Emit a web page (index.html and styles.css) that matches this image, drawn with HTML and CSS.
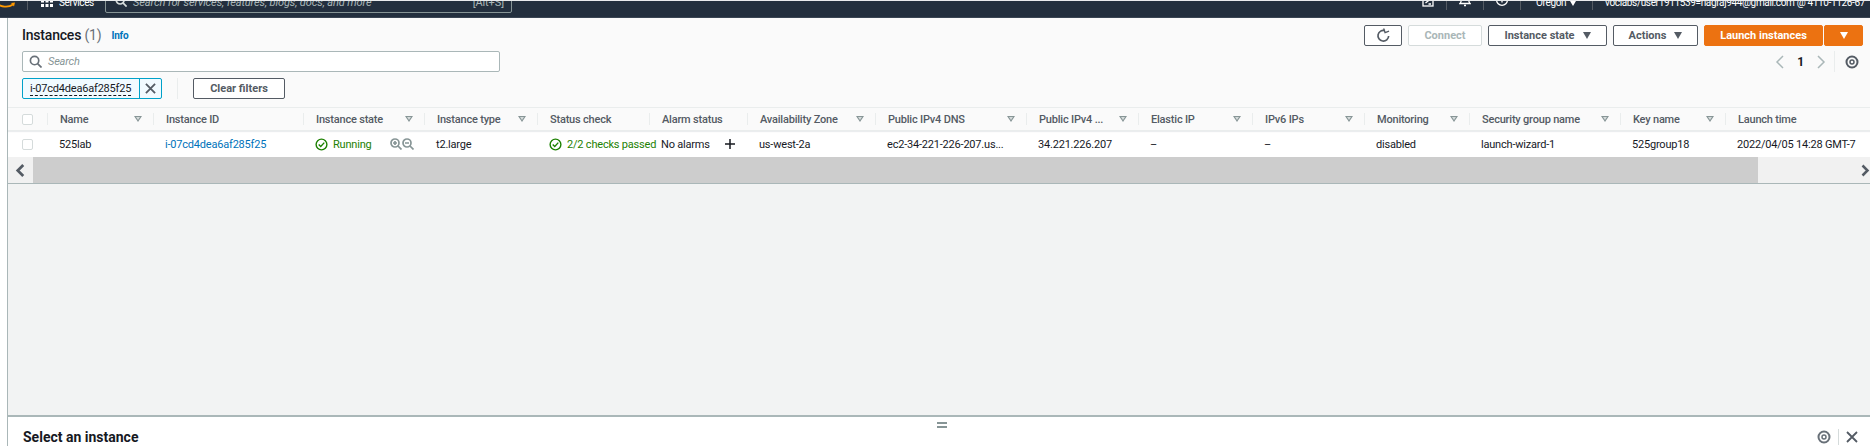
FILE: index.html
```html
<!DOCTYPE html>
<html lang="en">
<head>
    <meta charset="UTF-8">
    <title>Instances</title>
    <link rel="stylesheet" href="styles.css">
</head>
<body>
    <nav class="topnav">
        <svg class="logo" width="16" height="8" viewBox="0 0 16 8"><path d="M-4 1c5 4 12 5 17 1.500" fill="none" stroke="#f90" stroke-width="1.800"/><path d="M11 1l4-.5-1 4z" fill="#f90"/></svg>
        <span class="nav-sep nav-sep-first"></span>
        <svg class="grid-icon" width="12" height="12" viewBox="0 0 12 12" fill="#fff"><rect x="0" y="0" width="3" height="3"/><rect x="4.500" y="0" width="3" height="3"/><rect x="9" y="0" width="3" height="3"/><rect x="0" y="4.500" width="3" height="3"/><rect x="4.500" y="4.500" width="3" height="3"/><rect x="9" y="4.500" width="3" height="3"/><rect x="0" y="9" width="3" height="3"/><rect x="4.500" y="9" width="3" height="3"/><rect x="9" y="9" width="3" height="3"/></svg>
        <span class="nav-text services">Services</span>
        <div class="nav-search">
            <svg width="12" height="12" viewBox="0 0 14 14" fill="none" stroke="#d5dbdb" stroke-width="2"><circle cx="6" cy="6" r="4.500"/><path d="M9 9l4.500 4.500"/></svg>
            <span class="nav-search-text">Search for services, features, blogs, docs, and more</span>
            <span class="nav-search-key">[Alt+S]</span>
        </div>
        <div class="nav-right">
            <svg class="nav-icon" width="12" height="16" viewBox="0 0 12 16" fill="none" stroke="#fff" stroke-width="1.300"><rect x="1" y="2" width="10" height="12"/><path d="M3.500 7l2.500 2-2.500 2M6.500 12h2.500"/></svg>
            <span class="nav-sep"></span>
            <svg class="nav-icon" width="12" height="16" viewBox="0 0 12 16" fill="none" stroke="#fff" stroke-width="1.300"><path d="M1 11.500c1.500-1.500 1-3.500 1.800-5.500 1-3 5.400-3 6.400 0 .8 2 .3 4 1.800 5.500zM5 13.500h2"/></svg>
            <span class="nav-sep"></span>
            <svg class="nav-icon" width="12" height="16" viewBox="0 0 12 16" fill="none" stroke="#fff" stroke-width="1.300"><circle cx="6" cy="8" r="5.400"/><path d="M6 7v3.500M6 4.500v1"/></svg>
            <span class="nav-sep"></span>
            <span class="nav-text region">Oregon<i class="caret caret-white caret-nav"></i></span>
            <span class="nav-sep"></span>
            <span class="nav-text account">voclabs/user1911539=nagraj944@gmail.com @ 4110-1126-67</span>
        </div>
    </nav>

    <div class="page">
        <main class="instances">
            <header class="head">
                <div class="head-row">
                    <h1>Instances <span class="count">(1)</span></h1>
                    <a class="info">Info</a>
                    <div class="actions">
                        <button class="btn btn-icon">
                            <svg width="15" height="15" viewBox="0 0 16 16" fill="none" stroke="#545b64" stroke-width="1.800"><path d="M13.500 8.500A5.700 5.700 0 1 1 9.500 2.800"/><path d="M9 .5v4.500h4.500" stroke-width="1.500" transform="rotate(-20 9 3)"/></svg>
                        </button>
                        <button class="btn btn-disabled">Connect</button>
                        <button class="btn btn-state">Instance state <i class="caret"></i></button>
                        <button class="btn btn-actions">Actions <i class="caret"></i></button>
                        <div class="launch">
                            <button class="btn btn-primary">Launch instances</button>
                            <button class="btn btn-primary btn-split"><i class="caret caret-white"></i></button>
                        </div>
                    </div>
                </div>
                <div class="search-row">
                    <div class="search">
                        <svg width="13" height="13" viewBox="0 0 14 14" fill="none" stroke="#687078" stroke-width="1.800"><circle cx="6" cy="6" r="4.500"/><path d="M9.200 9.200l4.300 4.300"/></svg>
                        <span>Search</span>
                    </div>
                    <div class="pager">
                        <svg width="10" height="16" viewBox="0 0 10 16" fill="none" stroke="#aab7b8" stroke-width="1.500"><path d="M8 2L2 8l6 6"/></svg>
                        <b>1</b>
                        <svg width="10" height="16" viewBox="0 0 10 16" fill="none" stroke="#aab7b8" stroke-width="1.500"><path d="M2 2l6 6-6 6"/></svg>
                        <span class="pager-sep"></span>
                        <svg class="gear" width="14" height="14" viewBox="0 0 14 14" fill="none" stroke="#545b64"><circle cx="7" cy="7" r="5.500" stroke-width="2"/><circle cx="7" cy="7" r="2" stroke-width="1.500"/></svg>
                    </div>
                </div>
                <div class="filter-row">
                    <div class="chip">
                        <span class="chip-label"><span>i-07cd4dea6af285f25</span></span>
                        <span class="chip-close">
                            <svg width="11" height="11" viewBox="0 0 12 12" stroke="#545b64" stroke-width="2"><path d="M1 1l10 10M11 1L1 11"/></svg>
                        </span>
                    </div>
                    <span class="filter-sep"></span>
                    <button class="btn btn-clear">Clear filters</button>
                </div>
            </header>

            <div class="table">
                <div class="row row-head">
                    <div class="cell cell-check"><i class="box"></i></div>
                    <div class="cell">Name<i class="sort"></i></div>
                    <div class="cell">Instance ID</div>
                    <div class="cell">Instance state<i class="sort"></i></div>
                    <div class="cell">Instance type<i class="sort"></i></div>
                    <div class="cell">Status check</div>
                    <div class="cell">Alarm status</div>
                    <div class="cell">Availability Zone<i class="sort"></i></div>
                    <div class="cell">Public IPv4 DNS<i class="sort"></i></div>
                    <div class="cell">Public IPv4 ...<i class="sort"></i></div>
                    <div class="cell">Elastic IP<i class="sort"></i></div>
                    <div class="cell">IPv6 IPs<i class="sort"></i></div>
                    <div class="cell">Monitoring<i class="sort"></i></div>
                    <div class="cell">Security group name<i class="sort"></i></div>
                    <div class="cell">Key name<i class="sort"></i></div>
                    <div class="cell">Launch time</div>
                </div>
                <div class="row row-body">
                    <div class="cell cell-check"><i class="box"></i></div>
                    <div class="cell">525lab</div>
                    <div class="cell link">i-07cd4dea6af285f25</div>
                    <div class="cell ok">
                        <svg class="ok-icon" width="13" height="13" viewBox="0 0 14 14" fill="none" stroke="#1d8102" stroke-width="1.500"><circle cx="7" cy="7" r="5.800"/><path d="M4 7l2.200 2.200L10 5"/></svg>
                        Running
                        <span class="zoom-icons">
                            <svg width="12" height="12" viewBox="0 0 12 12" fill="none" stroke="#879596" stroke-width="1.700"><circle cx="5" cy="5" r="4"/><path d="M8 8l3.500 3.500M3 5h4M5 3v4"/></svg>
                            <svg width="12" height="12" viewBox="0 0 12 12" fill="none" stroke="#879596" stroke-width="1.700"><circle cx="5" cy="5" r="4"/><path d="M8 8l3.500 3.500M3 5h4"/></svg>
                        </span>
                    </div>
                    <div class="cell">t2.large</div>
                    <div class="cell ok">
                        <svg class="ok-icon" width="13" height="13" viewBox="0 0 14 14" fill="none" stroke="#1d8102" stroke-width="1.500"><circle cx="7" cy="7" r="5.800"/><path d="M4 7l2.200 2.200L10 5"/></svg>
                        2/2 checks passed
                    </div>
                    <div class="cell">No alarms
                        <svg class="plus" width="12" height="12" viewBox="0 0 12 12" stroke="#16191f" stroke-width="1.500"><path d="M6 1v10M1 6h10"/></svg>
                    </div>
                    <div class="cell">us-west-2a</div>
                    <div class="cell">ec2-34-221-226-207.us...</div>
                    <div class="cell">34.221.226.207</div>
                    <div class="cell">–</div>
                    <div class="cell">–</div>
                    <div class="cell">disabled</div>
                    <div class="cell">launch-wizard-1</div>
                    <div class="cell">525group18</div>
                    <div class="cell">2022/04/05 14:28 GMT-7</div>
                </div>
                <div class="hscroll">
                    <span class="arrow">
                        <svg width="11" height="13" viewBox="0 0 12 14" fill="none" stroke="#545b64" stroke-width="3"><path d="M9 1L3 7l6 6"/></svg>
                    </span>
                    <span class="thumb"></span>
                    <span class="arrow arrow-right">
                        <svg width="11" height="13" viewBox="0 0 12 14" fill="none" stroke="#545b64" stroke-width="3"><path d="M3 1l6 6-6 6"/></svg>
                    </span>
                </div>
            </div>
            <div class="empty"></div>
            <section class="details">
                <span class="grip"></span>
                <h2>Select an instance</h2>
                <div class="details-tools">
                    <svg width="14" height="14" viewBox="0 0 14 14" fill="none" stroke="#687078"><circle cx="7" cy="7" r="5.500" stroke-width="2"/><circle cx="7" cy="7" r="2" stroke-width="1.500"/></svg>
                    <span class="tools-sep"></span>
                    <svg width="12" height="12" viewBox="0 0 12 12" stroke="#545b64" stroke-width="1.800"><path d="M1 1l10 10M11 1L1 11"/></svg>
                </div>
            </section>
        </main>
    </div>
</body>
</html>
```

FILE: styles.css
```css
* {
    box-sizing: border-box;
}
html, body {
    margin: 0;
    height: 446px;
    overflow: hidden;
}
body {
    font-family: 'Roboto', 'Liberation Sans', sans-serif;
    font-size: 11px;
    letter-spacing: -0.2px;
    color: #16191f;
    background: #e9ebed;
    padding-top: 1px;
    display: flex;
    flex-direction: column;
}
.topnav {
    height: 17px;
    flex: none;
    background: #232f3e;
    border-bottom: 1px solid #3a4553;
    display: flex;
    align-items: flex-start;
    overflow: hidden;
    color: #fff;
}
.logo {
    flex: none;
    margin-top: 1px;
}
.nav-sep {
    flex: none;
    width: 1px;
    height: 9px;
    background: #545b64;
    margin: 0 12px;
}
.nav-sep-first {
    margin: 0 13px 0 11px;
}
.grid-icon {
    flex: none;
    margin-top: -6px;
}
.services {
    margin-left: 6px;
    width: 33px;
}
.nav-text {
    flex: none;
    line-height: 12px;
    font-size: 10px;
    letter-spacing: -0.35px;
    white-space: nowrap;
    margin-top: -4px;
}
.nav-search {
    flex: none;
    width: 407px;
    height: 30px;
    margin: -18px 0 0 13px;
    border: 1px solid #879596;
    border-radius: 2px;
    display: flex;
    align-items: flex-end;
    padding: 0 7px 3px 9px;
    gap: 6px;
    line-height: 12px;
    color: #aab7b8;
    font-style: italic;
    font-size: 11px;
    letter-spacing: -0.1px;
}
.nav-search svg {
    margin-bottom: 2px;
}
.nav-search-key {
    margin-left: auto;
    font-style: normal;
}
.nav-right {
    margin-left: auto;
    display: flex;
    align-items: flex-start;
}
.nav-icon {
    flex: none;
    margin-top: -9px;
}
.region {
    width: 41px;
    margin-left: 3px;
    margin-right: 3px;
    display: flex;
    align-items: center;
}
.account {
    width: 265px;
    overflow: hidden;
}
.page {
    flex: 1;
    min-height: 0;
    padding-left: 7px;
    background: #fff;
}
.instances {
    height: 100%;
    border-left: 1px solid #aab7b8;
    display: flex;
    flex-direction: column;
    background: #f2f3f3;
}
.head {
    background: #fafafa;
    height: 89px;
    padding: 7px 0 0 14px;
    flex: none;
}
.head-row {
    display: flex;
    align-items: center;
    height: 21px;
}
h1 {
    font-size: 14px;
    font-weight: 500;
    letter-spacing: -0.2px;
    margin: -2px 0 0;
}
.count {
    color: #687078;
    font-weight: 400;
}
.info {
    color: #0073bb;
    font-size: 10px;
    font-weight: 700;
    margin-left: 10px;
}
.actions {
    margin-left: auto;
    display: flex;
    gap: 6px;
    padding-right: 7px;
}
.btn {
    height: 21px;
    border: 1px solid #545b64;
    border-radius: 2px;
    background: #fff;
    color: #545b64;
    font: 700 11px 'Roboto', sans-serif;
    padding: 0;
    display: flex;
    align-items: center;
    justify-content: center;
    white-space: nowrap;
}
.btn-icon {
    width: 38px;
}
.btn-disabled {
    width: 74px;
    color: #aab7b8;
    border-color: #d5dbdb;
}
.btn-state {
    width: 119px;
}
.btn-actions {
    width: 85px;
}
.caret {
    display: inline-block;
    width: 0;
    height: 0;
    margin-left: 8px;
    border-left: 4.500px solid transparent;
    border-right: 4.500px solid transparent;
    border-top: 7px solid #545b64;
}
.caret-white {
    margin: 0;
    border-top-color: #fff;
}
.caret-nav {
    margin-left: 4px;
    border-left-width: 3.500px;
    border-right-width: 3.500px;
    border-top-width: 5px;
}
.launch {
    display: flex;
    gap: 1px;
}
.btn-primary {
    background: #ec7211;
    border-color: #ec7211;
    color: #fff;
    width: 119px;
}
.btn-split {
    width: 39px;
}
.search-row {
    display: flex;
    align-items: flex-start;
    height: 21px;
    margin-top: 5px;
}
.search {
    width: 478px;
    height: 21px;
    border: 1px solid #aab7b8;
    border-radius: 2px;
    background: #fff;
    display: flex;
    align-items: center;
    gap: 6px;
    padding-left: 6px;
    color: #879596;
    font-style: italic;
    font-size: 11px;
}
.pager {
    margin-left: auto;
    display: flex;
    align-items: center;
    height: 21px;
    padding-right: 11px;
    gap: 12px;
    font-size: 12px;
}
.pager-sep {
    width: 1px;
    height: 21px;
    margin-left: -4px;
    background: #eaeded;
}
.gear {
    margin-left: -2px;
}
.filter-row {
    display: flex;
    align-items: center;
    height: 21px;
    margin-top: 6px;
}
.chip {
    width: 140px;
    height: 21px;
    border: 1px solid #00a1c9;
    border-radius: 2px;
    background: #f1faff;
    display: flex;
}
.chip-label {
    flex: 1;
    display: flex;
    align-items: center;
    padding-left: 7px;
    border-right: 1px solid #00a1c9;
    white-space: nowrap;
}
.chip-label span {
    border-bottom: 1px dashed #16191f;
    line-height: 13px;
}
.chip-close {
    width: 21px;
    display: flex;
    align-items: center;
    justify-content: center;
}
.filter-sep {
    width: 1px;
    height: 21px;
    background: #eaeded;
    margin: 0 15px;
}
.btn-clear {
    width: 92px;
}
.table {
    flex: none;
    border-top: 1px solid #eaeded;
}
.row {
    display: grid;
    grid-template-columns: 39px 106px 150px 121px 113px 112px 98px 128px 151px 112px 114px 112px 105px 151px 105px 145px;
    align-items: center;
}
.row-head {
    height: 23px;
    background: #fafafa;
    border-bottom: 1px solid #eaeded;
    box-shadow: 0 1px 1px rgba(0, 25, 50, .08);
    font-weight: 500;
    color: #545b64;
    position: relative;
}
.row-body {
    height: 26px;
    background: #fff;
}
.cell {
    display: flex;
    align-items: center;
    height: 100%;
    padding-left: 12px;
    white-space: nowrap;
}
.row-head .cell {
    height: 12px;
    border-left: 1px solid #eaeded;
}
.row-head .cell-check {
    border-left: 0;
}
.cell-check,
.row-head .cell-check {
    padding-left: 14px;
}
.box {
    width: 11px;
    height: 11px;
    border: 1px solid #d5dbdb;
    border-radius: 2px;
    background: #fff;
}
.sort {
    position: relative;
    width: 0;
    height: 0;
    margin-left: auto;
    margin-right: 11px;
    border-left: 4px solid transparent;
    border-right: 4px solid transparent;
    border-top: 6px solid #879596;
}
.sort::after {
    content: "";
    position: absolute;
    left: -2px;
    top: -5px;
    border-left: 2px solid transparent;
    border-right: 2px solid transparent;
    border-top: 3px solid #d5dbdb;
}
.link {
    color: #0073bb;
}
.ok {
    color: #1d8102;
}
.ok-icon {
    flex: none;
    margin-right: 5px;
}
.zoom-icons {
    display: flex;
    gap: 0;
    margin-left: 18px;
}
.plus {
    flex: none;
    margin-left: 14px;
}
.hscroll {
    height: 27px;
    background: #f1f1f1;
    border-bottom: 1px solid #aab7b8;
    display: flex;
    align-items: center;
}
.arrow {
    width: 25px;
    display: flex;
    justify-content: center;
}
.thumb {
    width: 1725px;
    height: 100%;
    background: #cdcdcd;
}
.arrow-right {
    margin-left: auto;
    width: 10px;
    justify-content: flex-start;
}
.empty {
    flex: 1;
}
.details {
    height: 31px;
    flex: none;
    background: #fff;
    border-top: 2px solid #aab7b8;
    display: flex;
    align-items: center;
    padding: 0 12px 0 15px;
    position: relative;
}
.grip {
    position: absolute;
    left: 929px;
    top: 5px;
    width: 10px;
    height: 6px;
    border-top: 2px solid #879596;
    border-bottom: 2px solid #879596;
}
h2 {
    font-size: 14px;
    font-weight: 700;
    letter-spacing: 0;
    margin: 10px 0 0;
}
.details-tools {
    margin-left: auto;
    margin-top: 10px;
    display: flex;
    align-items: center;
    gap: 7px;
}
.tools-sep {
    width: 1px;
    height: 16px;
    background: #d5dbdb;
}
```
